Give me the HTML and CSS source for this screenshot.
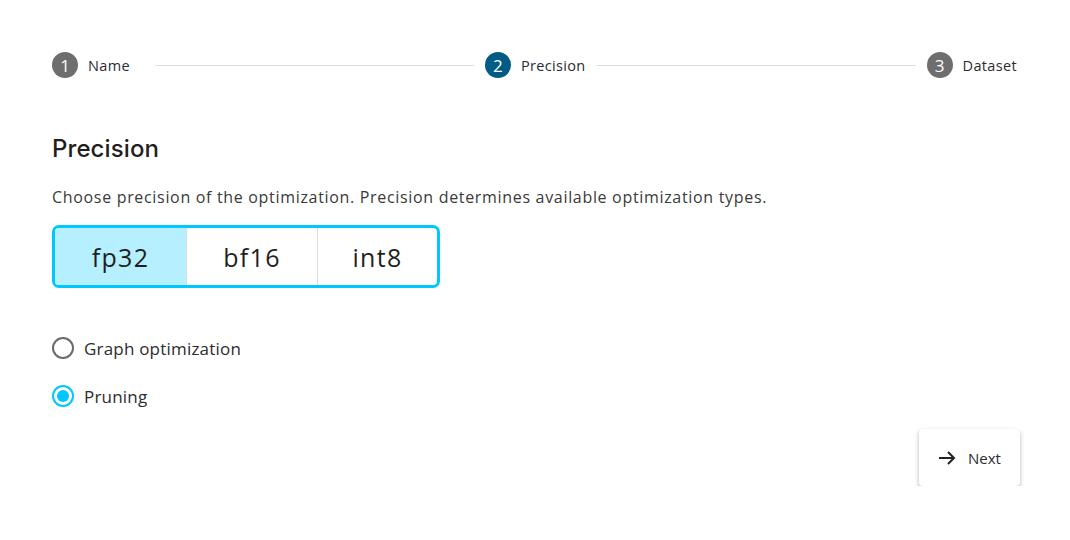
FILE: index.html
```html
<!DOCTYPE html>
<html>
<head>
<meta charset="utf-8">
<link rel="stylesheet" href="styles.css">
</head>
<body>
<div class="page">
  <div class="stepper">
    <div class="step first"><span class="num">1</span><span class="slabel">Name</span></div>
    <div class="line"></div>
    <div class="step"><span class="num active">2</span><span class="slabel">Precision</span></div>
    <div class="line"></div>
    <div class="step"><span class="num">3</span><span class="slabel">Dataset</span></div>
  </div>
  <h1 class="title">Precision</h1>
  <p class="desc">Choose precision of the optimization. Precision determines available optimization types.</p>
  <div class="toggle">
    <div class="seg seg1 selected">fp32</div>
    <div class="seg seg2">bf16</div>
    <div class="seg seg3">int8</div>
  </div>
  <div class="radios">
    <label class="radio"><span class="rcircle"></span><span>Graph optimization</span></label>
    <label class="radio"><span class="rcircle checked"></span><span>Pruning</span></label>
  </div>
  <div class="actions">
    <button class="next"><svg width="18" height="16" viewBox="0 0 18 16"><path d="M1 8h15M10 2l6 6-6 6" fill="none" stroke="#222" stroke-width="2"/></svg><span>Next</span></button>
  </div>
</div>
</body>
</html>
```
FILE: styles.css
```css
* { box-sizing: border-box; }
body { margin: 0; background: #fff; font-family: "Open Sans", "Noto Sans", sans-serif; color: #2b2c30; }
.page { padding: 52px 50px 0 52px; }
.stepper { display: flex; align-items: center; height: 26px; margin-right: 3px; }
.step { display: flex; align-items: center; }
.step.first { margin-right: 14px; }
.num { width: 26px; height: 26px; border-radius: 50%; background: #6e6e6e; color: #fff; display: flex; align-items: center; justify-content: center; font-size: 17px; }
.num.active { background: #005b85; }
.slabel { margin-left: 10px; font-size: 14.5px; letter-spacing: 0.35px; color: #2b2c30; }
.line { flex: 1; height: 1px; background: #dcdcdc; margin: 0 11px; }
.title { font-family: "Inter", sans-serif; font-weight: 500; font-size: 24px; letter-spacing: 0.1px; margin: 56px 0 0 0; line-height: 30px; color: #1f1f1f; }
.desc { font-size: 16px; letter-spacing: 0.68px; margin: 22px 0 0 0; line-height: 22px; color: #3a3a3a; }
.toggle { margin-top: 17px; width: 388px; height: 63px; border: 3px solid #00c7fd; border-radius: 7px; display: flex; overflow: hidden; }
.seg { display: flex; align-items: center; justify-content: center; font-size: 25px; color: #1f1f1f; letter-spacing: 1.3px; }
.seg1 { width: 131px; }
.seg2 { width: 131px; border-left: 1px solid #dcdcdc; }
.seg3 { flex: 1; border-left: 1px solid #dcdcdc; }
.seg.selected { background: #b6efff; }
.radios { margin-top: 48px; display: flex; flex-direction: column; gap: 24px; }
.radio { display: flex; align-items: center; gap: 10px; font-size: 17px; letter-spacing: 0.2px; color: #2b2c30; height: 24px; }
.rcircle { width: 22px; height: 22px; border-radius: 50%; border: 2px solid #6a6a6a; display: inline-block; position: relative; }
.rcircle.checked { border-color: #00c7fd; }
.rcircle.checked::after { content: ""; position: absolute; left: 3px; top: 3px; width: 12px; height: 12px; border-radius: 50%; background: #00c7fd; }
.actions { display: flex; justify-content: flex-end; margin-top: 21px; }
.next { width: 101px; height: 57px; border: none; background: #fff; border-radius: 4px; box-shadow: 0 2px 4px rgba(0,0,0,0.3); display: flex; align-items: center; justify-content: center; gap: 12px; font-family: "Open Sans", sans-serif; font-size: 15px; color: #2b2c30; padding: 0; }
```
